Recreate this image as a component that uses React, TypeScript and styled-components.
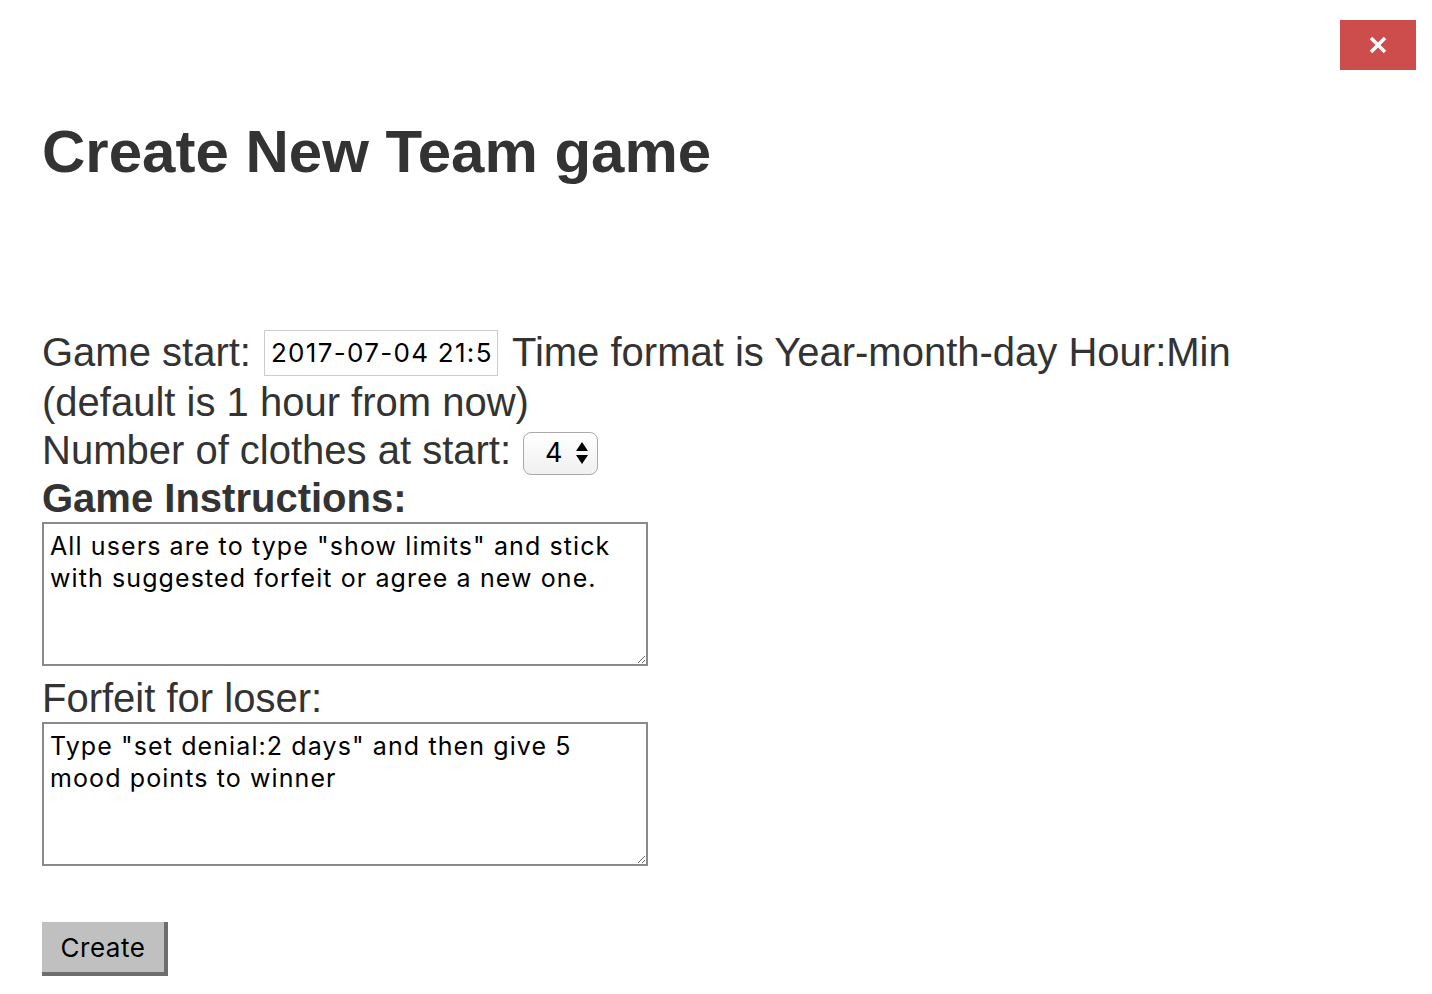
import React from 'react';
import styled, { createGlobalStyle } from 'styled-components';

const GlobalStyle = createGlobalStyle`
  body {
    margin: 0;
    background: #fff;
    font-family: "Liberation Sans", Arial, sans-serif;
    color: #333;
  }
`;

const Page = styled.div`
  position: relative;
  padding: 0 42px;
  min-height: 994px;
  box-sizing: border-box;
`;

const CloseButton = styled.button`
  position: absolute;
  top: 20px;
  right: 16px;
  width: 76px;
  height: 50px;
  border: none;
  background: #cd4d4d;
  color: #fff;
  display: flex;
  align-items: center;
  justify-content: center;
  cursor: pointer;
  padding: 0;
`;

const Title = styled.h1`
  margin: 0;
  padding-top: 118px;
  font-size: 60px;
  line-height: 68px;
  font-weight: bold;
  color: #333;
`;

const Form = styled.form`
  margin-top: 139px;
  font-size: 40px;
  line-height: 48px;
`;

const Line = styled.div<{ h?: number }>`
  display: flex;
  align-items: center;
  height: ${p => p.h ?? 48}px;
  white-space: nowrap;
`;

const Label = styled.span<{ bold?: boolean }>`
  font-weight: ${p => (p.bold ? 'bold' : 'normal')};
`;

const DateInput = styled.input`
  width: 234px;
  height: 46px;
  box-sizing: border-box;
  margin: 2px 14px 0 13px;
  padding: 0 6px;
  border: 1px solid #ccc;
  font-family: "Inter", "Liberation Sans", sans-serif;
  font-size: 26px;
  letter-spacing: 1.3px;
  color: #000;
`;

const Select = styled.div`
  display: inline-flex;
  align-items: center;
  gap: 12px;
  margin: 6px 0 0 12px;
  width: 75px;
  height: 43px;
  padding: 0 0 0 21px;
  box-sizing: border-box;
  border: 1px solid #aaa;
  border-radius: 8px;
  background: linear-gradient(#fff, #f0f0f0);
  font-family: "Inter", "Liberation Sans", sans-serif;
  font-size: 27px;
  color: #000;
`;

const TextArea = styled.textarea`
  display: block;
  width: 606px;
  height: 144px;
  box-sizing: border-box;
  border: 2px solid #8a8a8a;
  padding: 6px 10px 6px 6px;
  font-family: "Inter", "Liberation Sans", sans-serif;
  font-size: 25px;
  letter-spacing: 1.1px;
  line-height: 32px;
  color: #000;
  resize: both;
`;

const Gap = styled.div<{ h: number }>`
  height: ${p => p.h}px;
`;

const SubmitButton = styled.button`
  display: block;
  width: 126px;
  height: 54px;
  margin-top: -1px;
  background: #c0c0c0;
  border: none;
  border-right: 4px solid #6e6e6e;
  border-bottom: 4px solid #6e6e6e;
  font-family: "Inter", "Liberation Sans", sans-serif;
  font-size: 26px;
  letter-spacing: 0.5px;
  color: #000;
  cursor: pointer;
`;

const Arrows = () => (
  <svg width="14" height="24" viewBox="0 0 14 24">
    <path d="M7 1 L13 10 L1 10 Z" fill="#000" />
    <path d="M7 23 L13 14 L1 14 Z" fill="#000" />
  </svg>
);

const App = () => {
  return (
    <Page>
      <GlobalStyle />
      <CloseButton aria-label="close">
        <svg width="20" height="20" viewBox="0 0 20 20">
          <path d="M3 3 L17 17 M17 3 L3 17" stroke="#fff" strokeWidth="3.5" />
        </svg>
      </CloseButton>
      <Title>Create New Team game</Title>
      <Form onSubmit={e => e.preventDefault()}>
        <Line h={53}>
          <Label>Game start:</Label>
          <DateInput defaultValue="2017-07-04 21:57" />
          <Label>Time format is Year-month-day Hour:Min</Label>
        </Line>
        <Line>
          <Label>(default is 1 hour from now)</Label>
        </Line>
        <Line>
          <Label>Number of clothes at start:</Label>
          <Select>
            4
            <Arrows />
          </Select>
        </Line>
        <Line>
          <Label bold>Game Instructions:</Label>
        </Line>
        <TextArea defaultValue={'All users are to type "show limits" and stick with suggested forfeit or agree a new one.'} />
        <Gap h={8} />
        <Line>
          <Label>Forfeit for loser:</Label>
        </Line>
        <TextArea defaultValue={'Type "set denial:2 days" and then give 5 mood points to winner'} />
        <Gap h={57} />
        <SubmitButton type="submit">Create</SubmitButton>
      </Form>
    </Page>
  );
};

export default App;
